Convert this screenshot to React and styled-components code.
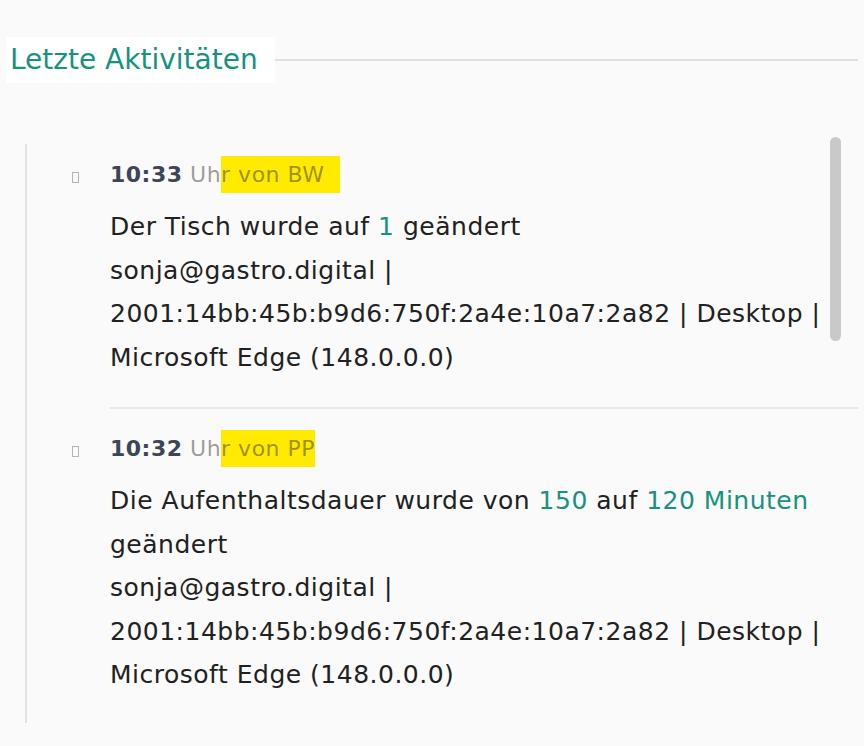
import React from 'react'
import styled, { createGlobalStyle } from 'styled-components'

const GlobalStyle = createGlobalStyle`
  html, body {
    margin: 0;
    background: #fafafa;
  }
  body {
    font-family: 'DejaVu Sans', 'Noto Sans', sans-serif;
    color: #212121;
  }
`

const Page = styled.div`
  padding: 37px 6px 24px 6px;
`
const TitleRow = styled.div`
  display: flex;
  align-items: center;
`
const Title = styled.h2`
  margin: 0;
  padding: 0 17px 0 4px;
  background: #fff;
  color: #16927f;
  font-size: 28px;
  font-weight: 400;
  line-height: 46px;
`
const Rule = styled.div`
  flex: 1;
  height: 2px;
  background: #e0e0e0;
`
const Timeline = styled.div`
  position: relative;
  margin: 52px 0 0 19px;
  padding-bottom: 26px;

  &::before {
    content: '';
    position: absolute;
    left: 0;
    top: 9px;
    bottom: 0;
    width: 2px;
    background: #e2e2e2;
  }
`
const Scrollbar = styled.div`
  position: absolute;
  top: 2px;
  left: 805px;
  width: 11px;
  height: 204px;
  border-radius: 6px;
  background: #c9c9c9;
`
const Entry = styled.div`
  display: flex;
`
const Marker = styled.div`
  width: 85px;
  padding: 37px 0 0 47px;
  box-sizing: border-box;
`
const Glyph = styled.span`
  display: block;
  width: 5px;
  height: 9px;
  border: 1px solid #b4b4b4;
`
const Content = styled.div`
  flex: 1;
  padding: 21px 0 ${p => (p.$last ? '0' : '28px')} 0;
  border-bottom: ${p => (p.$last ? 'none' : '2px solid #e8e8e8')};
`
const Header = styled.div`
  font-size: 22px;
  line-height: 38px;
  letter-spacing: 0.5px;
  color: rgba(0, 0, 0, 0.4);
`
const Time = styled.strong`
  color: #3d4656;
  font-weight: 700;
`
const Mark = styled.mark`
  background: #ffea00;
  color: rgba(0, 0, 0, 0.4);
  padding: 6px 0;
`
const Body = styled.div`
  margin-top: 11px;
  font-size: 25px;
  line-height: 43.5px;
  letter-spacing: 0.5px;
`
const Value = styled.span`
  color: #16927f;
`

const entries = [
  {
    time: '10:33',
    lead: 'Uh',
    marked: 'r von BW\u00a0\u00a0',
    text: (
      <>
        Der Tisch wurde auf <Value>1</Value> geändert
      </>
    ),
  },
  {
    time: '10:32',
    lead: 'Uh',
    marked: 'r von PP',
    text: (
      <>
        Die Aufenthaltsdauer wurde von <Value>150</Value> auf{' '}
        <Value>120 Minuten</Value> geändert
      </>
    ),
  },
]

const meta =
  'sonja@gastro.digital | 2001:14bb:45b:b9d6:750f:2a4e:10a7:2a82 | Desktop | Microsoft Edge (148.0.0.0)'

export default function App() {
  return (
    <Page>
      <GlobalStyle />
      <TitleRow>
        <Title>Letzte Aktivitäten</Title>
        <Rule />
      </TitleRow>
      <Timeline>
        <Scrollbar />
        {entries.map((e, i) => (
          <Entry key={e.time}>
            <Marker>
              <Glyph />
            </Marker>
            <Content $last={i === entries.length - 1}>
              <Header>
                <Time>{e.time}</Time> {e.lead}
                <Mark>{e.marked}</Mark>
              </Header>
              <Body>
                {e.text}
                <br />
                {meta}
              </Body>
            </Content>
          </Entry>
        ))}
      </Timeline>
    </Page>
  )
}
